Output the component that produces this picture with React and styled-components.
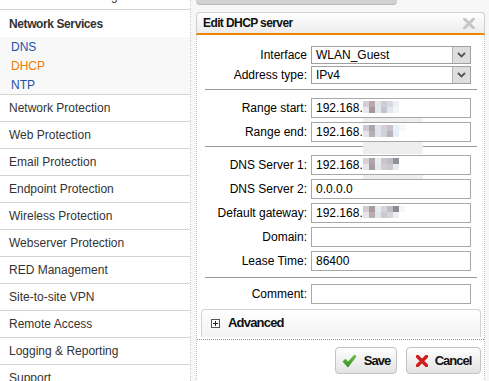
import React from "react";
import styled, { createGlobalStyle } from "styled-components";

const GlobalStyle = createGlobalStyle`
  html, body {
    margin: 0;
    height: 100%;
    overflow: hidden;
    background: #f7f7f7;
    font-family: "Liberation Sans", Arial, sans-serif;
    font-size: 12px;
  }
`;

const Page = styled.div`
  display: flex;
  height: 381px;
  overflow: hidden;
`;

const Sidebar = styled.nav`
  width: 190px;
  flex-shrink: 0;
  background: #fff;
  border-right: 1px dotted #c8c8c8;
`;

const MenuList = styled.div`
  margin-top: -17px;
`;

const MenuRow = styled.div`
  height: 26px;
  display: flex;
  align-items: center;
  padding-left: 9px;
  border-bottom: 1px solid #d4d4d4;
  color: #333;
  white-space: nowrap;
`;

const SectionHead = styled.div`
  height: 27px;
  display: flex;
  align-items: center;
  padding-left: 9px;
  font-weight: bold;
  letter-spacing: -0.4px;
  color: #333;
`;

const SubList = styled.div`
  background: #f8f8f8;
  border-bottom: 1px solid #d4d4d4;
`;

const SubItem = styled.div`
  height: 19px;
  display: flex;
  align-items: center;
  padding-left: 11px;
  color: ${(p) => (p.$active ? "#f07c00" : "#2352ac")};
`;

const Main = styled.main`
  flex: 1;
  padding-left: 5px;
`;

const TopBar = styled.div`
  width: 201px;
  height: 4px;
  background: #d2d2d2;
  border-bottom: 1px solid #b8b8b8;
  border-radius: 0 0 4px 4px;
  margin-bottom: 7px;
`;

const Dialog = styled.section`
  width: 289px;
`;

const TitleBar = styled.header`
  height: 20px;
  display: flex;
  align-items: center;
  justify-content: space-between;
  padding: 0 9px 0 6px;
  border: 1px solid #cfcfcf;
  border-bottom: 2px solid #f08300;
  border-radius: 4px 4px 0 0;
  background: linear-gradient(#ffffff, #ececec);
`;

const Title = styled.h2`
  margin: 0;
  font-size: 12px;
  font-weight: bold;
  letter-spacing: -0.6px;
  color: #111;
`;

const Body = styled.div`
  background: #fff;
  border-left: 1px dotted #bdbdbd;
  border-right: 1px dotted #bdbdbd;
  padding-top: 11px;
  height: 400px;
`;

const Group = styled.div`
  display: grid;
  grid-template-columns: 110px 160px;
  column-gap: 4px;
  row-gap: ${(p) => p.$gap}px;
  padding: ${(p) => p.$top}px 0 ${(p) => p.$bottom}px;
  margin: 0 8px;
  margin-left: 0;
  border-bottom: ${(p) => (p.$line ? "1px solid #9a9a9a" : "none")};
  position: relative;
  &::after {
    content: none;
  }
`;

const GroupWrap = styled.div`
  position: relative;
  & > div {
    border-bottom: none;
  }
`;

const Divider = styled.hr`
  margin: 0 7px 0 8px;
  border: none;
  border-top: 1px solid #9a9a9a;
  height: 0;
`;

const Label = styled.label`
  display: flex;
  align-items: center;
  justify-content: flex-end;
  color: #000;
  white-space: nowrap;
`;

const FieldWrap = styled.div`
  position: relative;
  height: ${(p) => p.$h}px;
`;

const Input = styled.input`
  box-sizing: border-box;
  width: 100%;
  height: 100%;
  margin: 0;
  padding: 0 4px;
  border: 1px solid #a8a8a8;
  font-family: "Liberation Sans", Arial, sans-serif;
  font-size: 12px;
  color: #000;
  background: #fff;
  outline: none;
`;

const SelectBox = styled.div`
  box-sizing: border-box;
  height: 18px;
  display: flex;
  align-items: center;
  border: 1px solid #a0a0a0;
  background: #fff;
`;

const SelectText = styled.span`
  flex: 1;
  padding-left: 4px;
  color: #000;
`;

const ArrowBox = styled.span`
  width: 17px;
  height: 100%;
  display: flex;
  align-items: center;
  justify-content: center;
  background: #dedede;
  border-left: 1px solid #b4b4b4;
`;

const BlurMask = styled.span`
  position: absolute;
  left: 52px;
  top: 3px;
  display: grid;
  grid-template-columns: repeat(8, 6px);
  grid-auto-rows: 6px;
  pointer-events: none;
`;

const BlurStrip = styled.span`
  position: absolute;
  left: 52px;
  top: 100%;
  width: 60px;
  height: ${(p) => p.$h}px;
  background: #eeeeee;
`;

const Cell = styled.span`
  background: ${(p) => p.$c};
`;

const Advanced = styled.div`
  height: 28px;
  margin: 5px 3px 0 4px;
  border: 1px solid #d2d2d2;
  border-bottom: none;
  border-radius: 4px 4px 0 0;
  background: linear-gradient(#ffffff, #f2f2f2);
  display: flex;
  align-items: flex-start;
  padding: 6px 0 0 9px;
  box-sizing: border-box;
  gap: 8px;
`;

const AdvancedText = styled.span`
  font-size: 13px;
  font-weight: bold;
  letter-spacing: -0.8px;
  color: #111;
  line-height: 14px;
`;

const DottedLine = styled.div`
  margin-top: 2px;
  border-top: 1px dotted #8c8c8c;
`;

const Buttons = styled.div`
  display: flex;
  justify-content: flex-end;
  gap: 9px;
  padding: 7px 3px 0 0;
`;

const Button = styled.button`
  height: 27px;
  width: ${(p) => p.$w}px;
  display: flex;
  align-items: center;
  justify-content: center;
  gap: 7px;
  padding: 0;
  border: 1px solid #c2c2c2;
  border-radius: 4px;
  background: linear-gradient(#ffffff, #e2e2e2);
  font-family: "Liberation Sans", Arial, sans-serif;
  font-size: 13px;
  font-weight: bold;
  letter-spacing: -1px;
  color: #111;
`;

const blurSets = {
  a: ["#d6ccd4", "#b9a8ae", "#e6e6ec", "#cfcfd8", "#d8dae2", "#eef0f4", "#fff", "#fff",
      "#e8e8ee", "#a89898", "#e2e8f0", "#c8c4cc", "#e4e8ee", "#f4f4f6", "#fff", "#fff"],
  b: ["#d0c8d0", "#a8a8b0", "#e0e4ec", "#d4d0d8", "#c8c4cc", "#e8f0f8", "#f4f8fc", "#fff",
      "#e4e4ea", "#b8b0b4", "#dde4ee", "#cfd2da", "#b8b4ba", "#e4eef8", "#fff", "#fff"],
  c: ["#d8d0d6", "#b0a4aa", "#eaeef2", "#cac6cc", "#bcbcc4", "#909098", "#fff", "#fff",
      "#e6e6ea", "#a89ca2", "#e4eaf0", "#d0ccd2", "#c8c8ce", "#e8eaee", "#fff", "#fff"],
  d: ["#d4ccd2", "#a89ca2", "#e8ecf0", "#d6d4da", "#c0bcc2", "#8c8c94", "#f4f6f8", "#fff",
      "#e6e4ea", "#b8aeb2", "#e0e6ee", "#cccad0", "#d4d4da", "#eceef2", "#fff", "#fff"],
};

function Blur({ set, strip }) {
  return (
    <>
      <BlurMask>
        {blurSets[set].map((c, i) => (
          <Cell key={i} $c={c} />
        ))}
      </BlurMask>
      {strip ? <BlurStrip $h={strip} /> : null}
    </>
  );
}

function Field({ value, blur, strip, h = 20 }) {
  return (
    <FieldWrap $h={h}>
      <Input readOnly value={value} />
      {blur ? <Blur set={blur} strip={strip} /> : null}
    </FieldWrap>
  );
}

function Select({ value }) {
  return (
    <SelectBox>
      <SelectText>{value}</SelectText>
      <ArrowBox>
        <svg width="9" height="6" viewBox="0 0 9 6">
          <path d="M1 1 L4.5 4.5 L8 1" fill="none" stroke="#555" strokeWidth="1.8" />
        </svg>
      </ArrowBox>
    </SelectBox>
  );
}

const CloseIcon = () => (
  <svg width="12" height="11" viewBox="0 0 12 11">
    <path d="M1.5 1 L10.5 10 M10.5 1 L1.5 10" stroke="#c6c6c6" strokeWidth="3" strokeLinecap="round" />
  </svg>
);

const PlusIcon = () => (
  <svg width="9" height="9" viewBox="0 0 9 9" style={{ marginTop: 3 }}>
    <rect x="0.5" y="0.5" width="8" height="8" fill="#fff" stroke="#555" />
    <path d="M2 4.5 H7 M4.5 2 V7" stroke="#222" strokeWidth="1" />
  </svg>
);

const CheckIcon = () => (
  <svg width="15" height="14" viewBox="0 0 15 14">
    <defs>
      <linearGradient id="gchk" x1="0" y1="0" x2="0" y2="1">
        <stop offset="0" stopColor="#6cc24a" />
        <stop offset="1" stopColor="#2f8f22" />
      </linearGradient>
    </defs>
    <path d="M0.5 7.5 L3.5 4.8 L6 7.6 L12.6 0.5 L14.5 2.6 L6 13.5 Z" fill="url(#gchk)" />
  </svg>
);

const CrossIcon = () => (
  <svg width="12" height="12" viewBox="0 0 12 12">
    <path d="M1.5 1.5 L10.5 10.5 M10.5 1.5 L1.5 10.5" stroke="#d21c1c" strokeWidth="3.4" strokeLinecap="round" />
  </svg>
);

const menuItems = [
  "Network Protection",
  "Web Protection",
  "Email Protection",
  "Endpoint Protection",
  "Wireless Protection",
  "Webserver Protection",
  "RED Management",
  "Site-to-site VPN",
  "Remote Access",
  "Logging & Reporting",
  "Support",
];

export default function App() {
  return (
    <>
      <GlobalStyle />
      <Page>
        <Sidebar>
          <MenuList>
            <MenuRow>Interfaces &amp; Routing</MenuRow>
            <SectionHead>Network Services</SectionHead>
            <SubList>
              <SubItem>DNS</SubItem>
              <SubItem $active>DHCP</SubItem>
              <SubItem>NTP</SubItem>
            </SubList>
            {menuItems.map((item) => (
              <MenuRow key={item}>{item}</MenuRow>
            ))}
          </MenuList>
        </Sidebar>

        <Main>
          <TopBar />
          <Dialog>
            <TitleBar>
              <Title>Edit DHCP server</Title>
              <CloseIcon />
            </TitleBar>
            <Body>
              <Group $gap={2} $top={0} $bottom={5}>
                <Label>Interface</Label>
                <Select value="WLAN_Guest" />
                <Label>Address type:</Label>
                <Select value="IPv4" />
              </Group>
              <Divider />
              <Group $gap={4} $top={8} $bottom={4}>
                <Label>Range start:</Label>
                <Field value="192.168." blur="a" strip={7} />
                <Label>Range end:</Label>
                <Field value="192.168." blur="b" strip={12} />
              </Group>
              <Divider />
              <Group $gap={4} $top={8} $bottom={6}>
                <Label>DNS Server 1:</Label>
                <Field value="192.168." blur="c" strip={4} />
                <Label>DNS Server 2:</Label>
                <Field value="0.0.0.0" />
                <Label>Default gateway:</Label>
                <Field value="192.168." blur="d" />
                <Label>Domain:</Label>
                <Field value="" />
                <Label>Lease Time:</Label>
                <Field value="86400" />
              </Group>
              <Divider />
              <Group $gap={4} $top={6} $bottom={0}>
                <Label>Comment:</Label>
                <Field value="" />
              </Group>
              <Advanced>
                <PlusIcon />
                <AdvancedText>Advanced</AdvancedText>
              </Advanced>
              <DottedLine />
              <Buttons>
                <Button $w={62}>
                  <CheckIcon />
                  Save
                </Button>
                <Button $w={75}>
                  <CrossIcon />
                  Cancel
                </Button>
              </Buttons>
            </Body>
          </Dialog>
        </Main>
      </Page>
    </>
  );
}
